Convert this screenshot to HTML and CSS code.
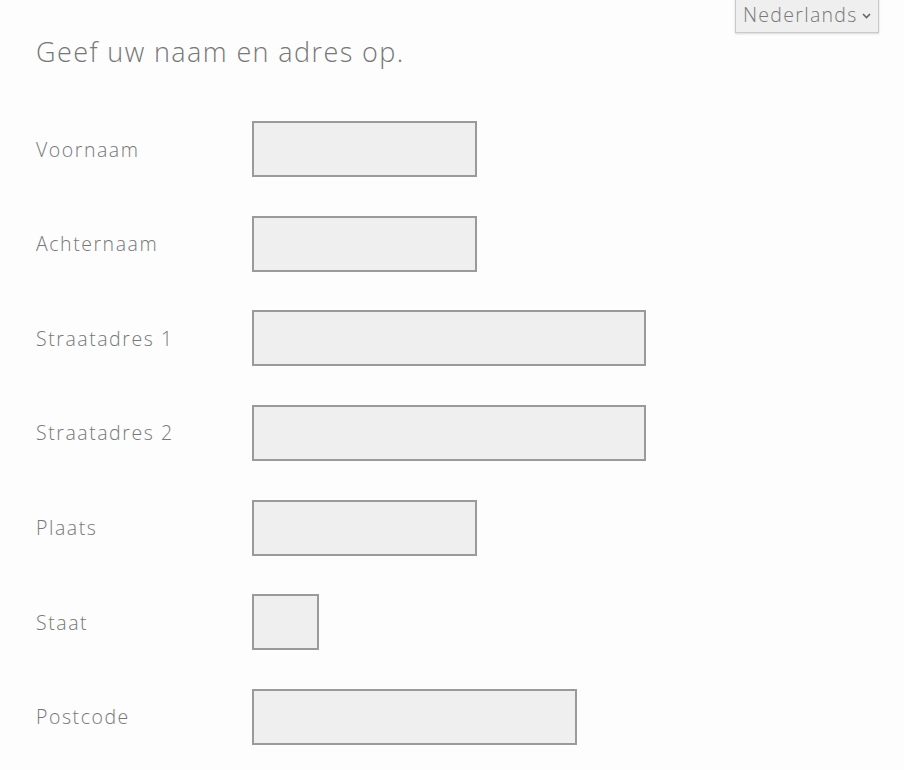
FILE: index.html
```html
<!DOCTYPE html>
<html lang="nl">
<head>
<meta charset="utf-8">
<title>Adres</title>
<link rel="stylesheet" href="styles.css">
</head>
<body>
<div class="page">
  <div class="topbar">
    <div class="lang">
      <span class="lang-text">Nederlands</span>
      <svg class="chev" width="9" height="6" viewBox="0 0 9 6"><path d="M1 1 L4.5 4.5 L8 1" fill="none" stroke="#666" stroke-width="1.6"/></svg>
    </div>
  </div>
  <h1 class="title">Geef uw naam en adres op.</h1>
  <form class="form">
    <label class="lbl">Voornaam</label><div class="field f-md"></div>
    <label class="lbl">Achternaam</label><div class="field f-md"></div>
    <label class="lbl">Straatadres 1</label><div class="field f-lg"></div>
    <label class="lbl">Straatadres 2</label><div class="field f-lg"></div>
    <label class="lbl">Plaats</label><div class="field f-md"></div>
    <label class="lbl">Staat</label><div class="field f-sm"></div>
    <label class="lbl">Postcode</label><div class="field f-zip"></div>
  </form>
</div>
</body>
</html>
```
FILE: styles.css
```css
html, body {
  margin: 0;
  padding: 0;
  background: #fdfdfd;
  overflow: hidden;
}
.page {
  width: 904px;
  height: 770px;
  font-family: "Open Sans", "Liberation Sans", sans-serif;
  font-weight: 300;
  color: #777;
}
.topbar {
  display: flex;
  justify-content: flex-end;
  padding-right: 25px;
  height: 0;
}
.lang {
  margin-top: -10px;
  width: 144px;
  height: 43px;
  box-sizing: border-box;
  border: 1px solid #c9c9c9;
  background: #efefef;
  box-shadow: 0 1px 2px rgba(0,0,0,0.15);
  display: flex;
  align-items: flex-end;
  padding: 0 0 5px 7px;
  gap: 4px;
}
.lang-text {
  font-size: 19.5px;
  letter-spacing: 1.3px;
  line-height: 24px;
  color: #777;
}
.chev { margin-bottom: 8px; }
.title {
  margin: 0;
  padding: 34px 0 0 36px;
  font-size: 27px;
  letter-spacing: 1.4px;
  font-weight: 300;
  line-height: 36px;
  color: #777;
}
.form {
  display: grid;
  grid-template-columns: 216px auto;
  row-gap: 38.67px;
  padding: 51px 0 0 36px;
  align-items: center;
  justify-items: start;
}
.lbl {
  font-size: 19.5px;
  letter-spacing: 1.55px;
  color: #777;
}
.field {
  height: 56px;
  box-sizing: border-box;
  border: 2px solid #9a9a9a;
  background: #efefef;
}
.f-md { width: 225px; }
.f-lg { width: 394px; }
.f-sm { width: 67px; }
.f-zip { width: 325px; }
```
